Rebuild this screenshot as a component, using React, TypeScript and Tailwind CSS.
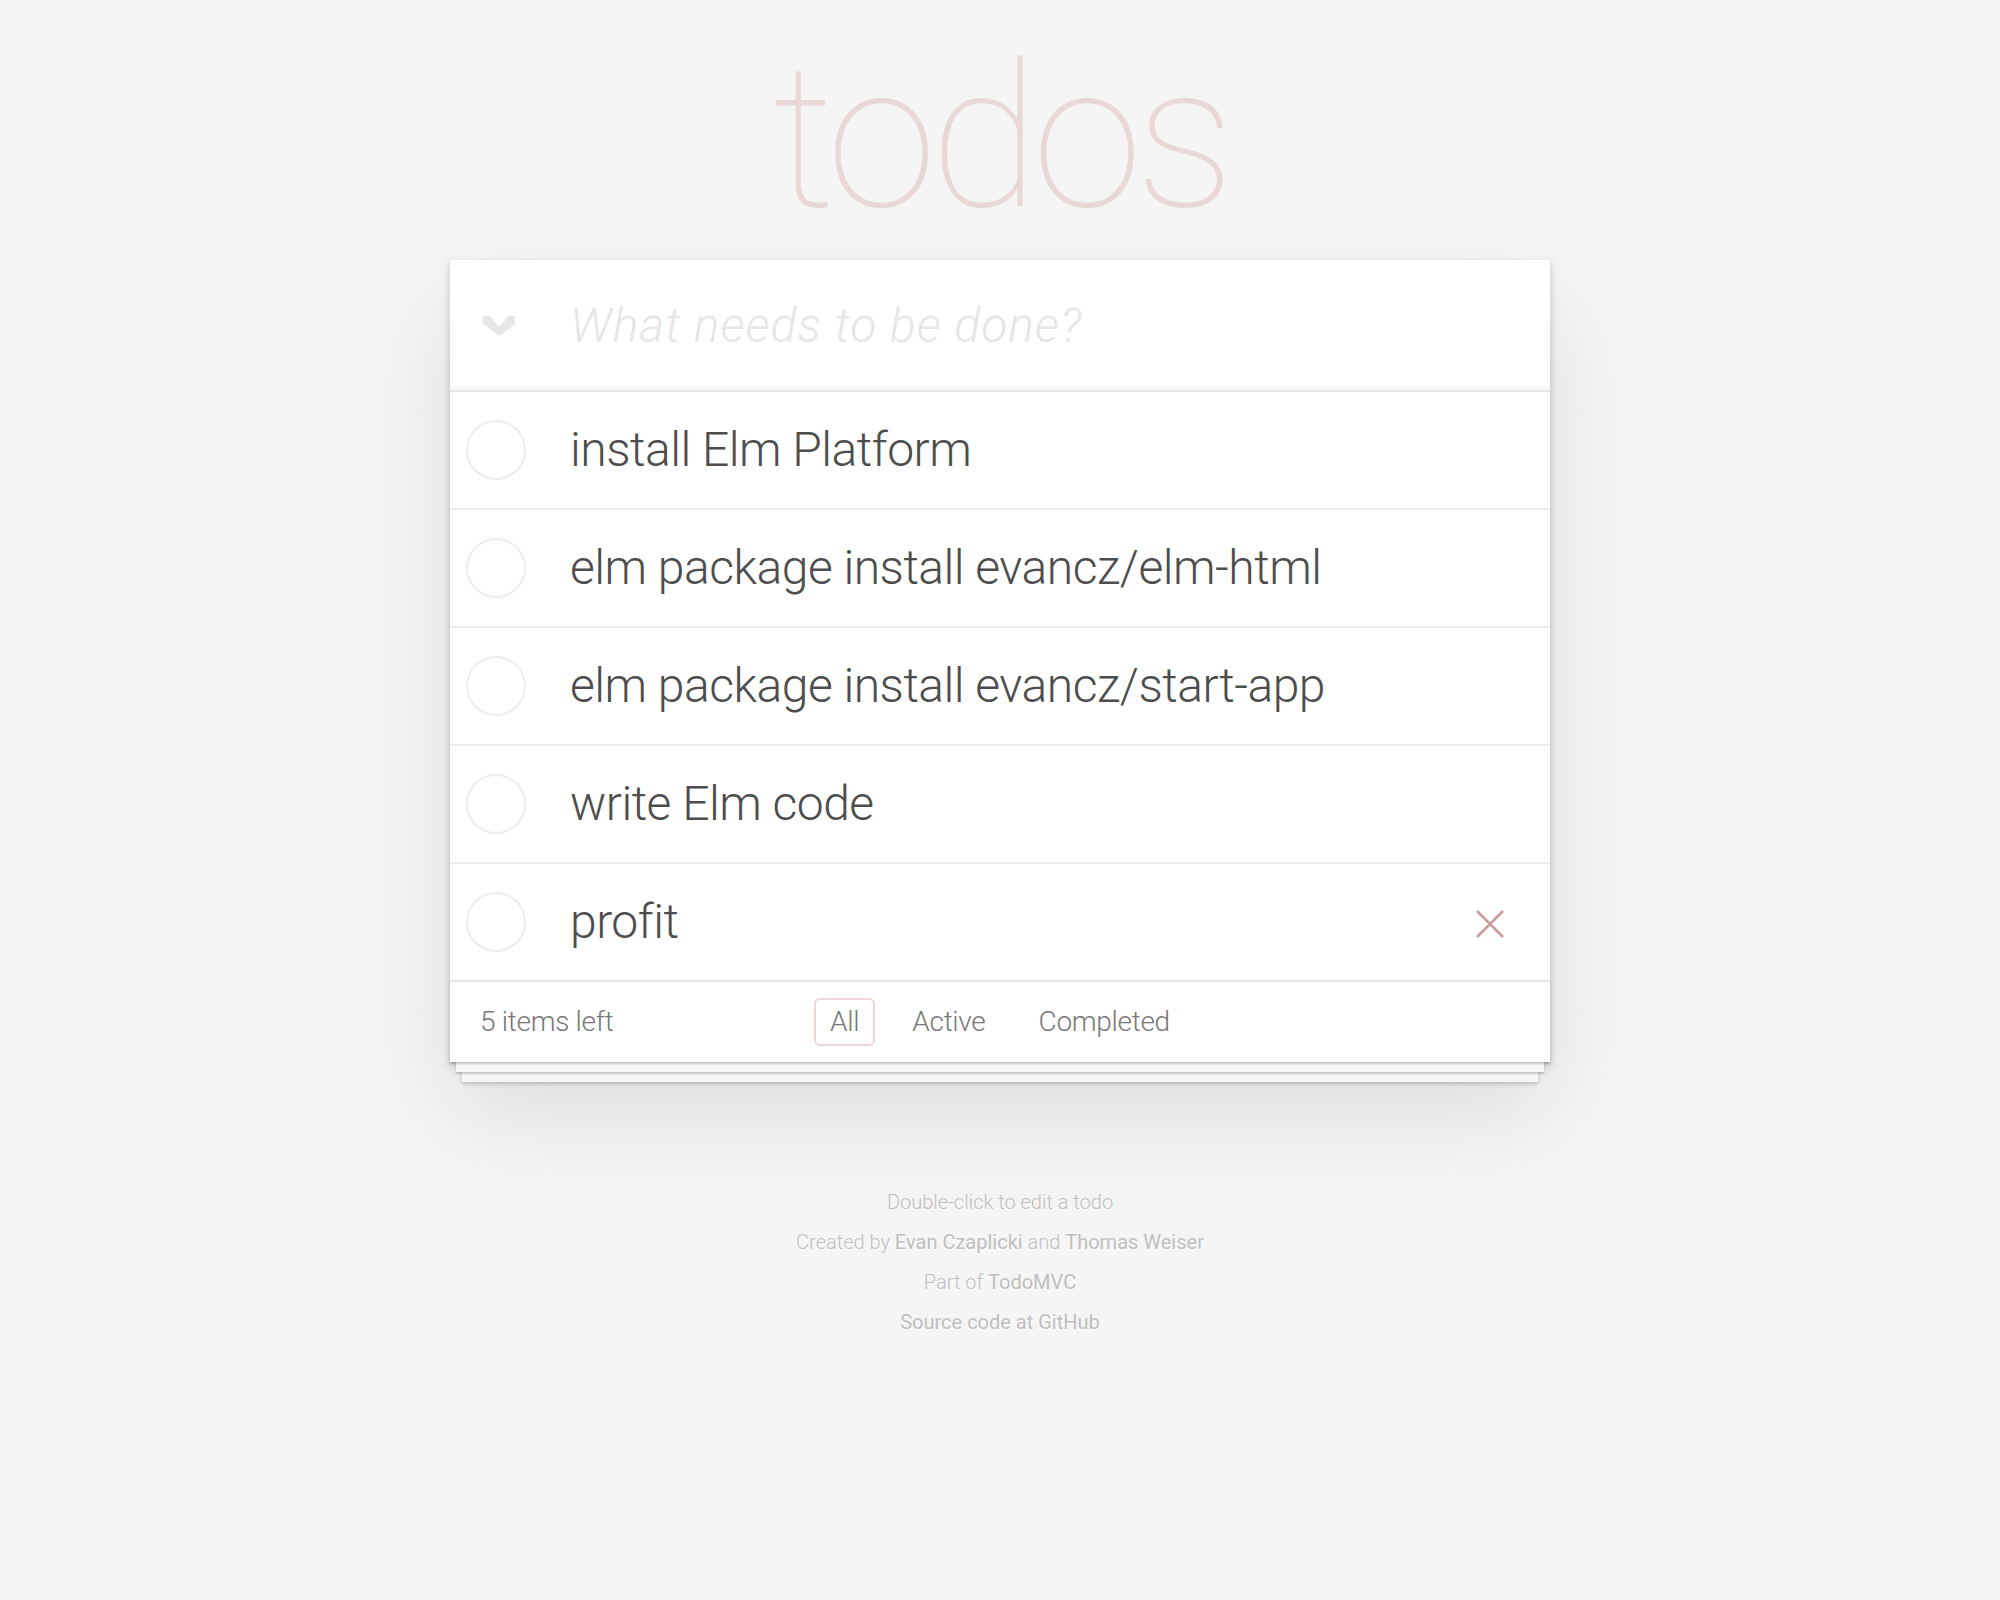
import React from "react";

const todos = [
  "install Elm Platform",
  "elm package install evancz/elm-html",
  "elm package install evancz/start-app",
  "write Elm code",
  "profit",
];

function Circle() {
  return (
    <svg width="60" height="60" viewBox="0 0 60 60" className="shrink-0">
      <circle cx="30" cy="30" r="29" fill="none" stroke="#ededed" strokeWidth="2" />
    </svg>
  );
}

function Chevron() {
  return (
    <svg width="32" height="20" viewBox="0 0 32 20">
      <polygon points="0,0 7,0 16,11 25,0 32,0 32,8 16,20 0,8" fill="#e6e6e6" />
    </svg>
  );
}

function Cross() {
  return (
    <svg width="28" height="28" viewBox="0 0 28 28">
      <path d="M1 1 L27 27 M27 1 L1 27" stroke="#cc9a9a" strokeWidth="2.5" fill="none" />
    </svg>
  );
}

export default function App() {
  return (
    <div
      className="min-h-screen bg-[#f5f5f5] text-[#4d4d4d] font-light antialiased"
      style={{ fontFamily: "Roboto, 'Liberation Sans', sans-serif" }}
    >
      <div className="w-[1100px] mx-auto">
        <h1 className="h-[260px] pt-[38px] text-center text-[200px] leading-[200px] font-thin text-[rgba(175,47,47,0.15)] tracking-[-7px]">
          todos
        </h1>
        <section className="bg-white shadow-[0_4px_8px_0_rgba(0,0,0,0.2),0_50px_100px_0_rgba(0,0,0,0.1)]">
          <header className="h-[130px] flex items-center shadow-[inset_0_-4px_2px_rgba(0,0,0,0.03)]">
            <div className="w-[120px] flex justify-start pl-[33px] pt-[2px]">
              <Chevron />
            </div>
            <input
              className="flex-1 h-full bg-transparent outline-none text-[48px] font-light tracking-[1px] placeholder:italic placeholder:text-[#e6e6e6] placeholder:font-light"
              placeholder="What needs to be done?"
            />
          </header>
          <ul className="border-t-2 border-[#e6e6e6]">
            {todos.map((t, i) => (
              <li
                key={t}
                className={
                  "flex items-center " +
                  (i < todos.length - 1 ? "h-[118px] border-b-2 border-[#ededed]" : "h-[116px]")
                }
              >
                <div className="w-[120px] pl-[16px] flex items-center">
                  <Circle />
                </div>
                <span className="flex-1 text-[48px] leading-[56px] tracking-[-0.5px] text-[#4d4d4d]">{t}</span>
                {i === todos.length - 1 && (
                  <div className="w-[80px] mr-[20px] flex items-center justify-center pt-[4px]">
                    <Cross />
                  </div>
                )}
              </li>
            ))}
          </ul>
          <footer className="h-[82px] border-t-2 border-[#e6e6e6] px-[30px] grid grid-cols-[1fr_auto_1fr] items-center text-[28px] leading-[32px] tracking-[-0.3px] text-[#777] shadow-[0_2px_2px_rgba(0,0,0,0.2),0_16px_0_-6px_#f6f6f6,0_18px_2px_-6px_rgba(0,0,0,0.2),0_32px_0_-12px_#f6f6f6,0_34px_4px_-12px_rgba(0,0,0,0.2)]">
            <span>5 items left</span>
            <ul className="flex items-center gap-[21px]">
              <li>
                <a className="block px-[14px] py-[6px] border-2 border-[rgba(175,47,47,0.2)] rounded-[6px]">All</a>
              </li>
              <li>
                <a className="block px-[14px] py-[6px] border-2 border-transparent rounded-[6px]">Active</a>
              </li>
              <li>
                <a className="block px-[14px] py-[6px] border-2 border-transparent rounded-[6px]">Completed</a>
              </li>
            </ul>
            <span />
          </footer>
        </section>
        <footer className="mt-[130px] flex flex-col gap-[20px] items-center text-[20px] leading-[20px] text-[#bfbfbf] [text-shadow:0_2px_0_rgba(255,255,255,0.5)]">
          <p>Double-click to edit a todo</p>
          <p>
            Created by <a className="font-normal">Evan Czaplicki</a> and{" "}
            <a className="font-normal">Thomas Weiser</a>
          </p>
          <p>
            Part of <a className="font-normal">TodoMVC</a>
          </p>
          <p>
            <a className="font-normal">Source code at GitHub</a>
          </p>
        </footer>
      </div>
    </div>
  );
}
